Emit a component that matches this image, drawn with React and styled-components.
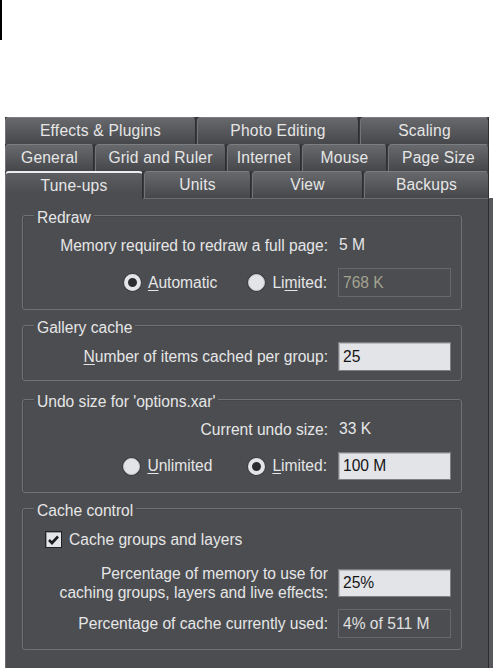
import React from "react"
import styled, { createGlobalStyle } from "styled-components"

const GlobalStyle = createGlobalStyle`
  html, body {
    margin: 0;
    padding: 0;
    background: #ffffff;
  }
  body {
    font-family: "Liberation Sans", Arial, sans-serif;
    font-size: 15.6px;
    overflow: hidden;
  }
`

const Page = styled.div`
  width: 493px;
  height: 668px;
  overflow: hidden;
`

const CursorMark = styled.div`
  width: 2px;
  height: 40px;
  background: #000;
`

const Dialog = styled.div`
  margin: 77px 0 0 5px;
  width: 484px;
  color: #e6e6e6;
`

const TabRow = styled.div`
  display: flex;
  gap: 1px;
  height: 27px;
  background: #37393d;
`

const Tab = styled.div`
  box-sizing: border-box;
  width: ${p => p.$w}px;
  flex: 0 0 auto;
  height: 27px;
  display: flex;
  align-items: center;
  justify-content: center;
  border-radius: 4px 4px 0 0;
  border-top: 1px solid #7c7e82;
  border-left: 1px solid #727478;
  border-right: 1px solid #2c2e32;
  background: linear-gradient(#67696d, #45474b);
  letter-spacing: 0.2px;
  white-space: nowrap;

  &:last-child {
    flex: 1 1 auto;
  }
`

const ActiveTab = styled(Tab)`
  position: relative;
  z-index: 1;
  height: 28px;
  margin-bottom: -1px;
  border-top: 2px solid #ededed;
  background: linear-gradient(#5c5e62, #4b4d51 80%);
`

const Panel = styled.div`
  display: flex;
  flex-direction: column;
  height: 480px;
  padding: 16px 26px 0 16px;
  background: #4b4d51;
  border-top: 1px solid #6a6c70;
  border-left: 1px solid #6a6c70;
  border-right: 1px solid #2a2c30;
  box-shadow: 4px 0 0 #56585c;
`

const Group = styled.div`
  position: relative;
  margin-top: ${p => p.$top || 0}px;
  display: flex;
  flex-direction: column;
  padding: ${p => p.$pad};
  border: 1px solid #6f7175;
  border-radius: 3px;
  box-shadow: inset 1px 1px 0 #44464a;
`

const Legend = styled.div`
  position: absolute;
  top: -7px;
  left: 11px;
  padding: 0 3px;
  line-height: 18px;
  background: #4b4d51;
`

const Row = styled.div`
  display: flex;
  align-items: center;
  justify-content: ${p => (p.$left ? "flex-start" : "flex-end")};
  gap: 10px;
  height: ${p => p.$h}px;
  margin-top: ${p => p.$gap || 0}px;
  padding: ${p => (p.$left ? "0 0 0 22px" : "0 10px 0 0")};
`

const Label = styled.div`
  text-align: right;
  line-height: 19px;
  white-space: nowrap;
`

const Value = styled.div`
  box-sizing: border-box;
  width: 113px;
  padding-left: 1px;
`

const Field = styled.div`
  box-sizing: border-box;
  width: 113px;
  height: ${p => p.$h || 29}px;
  display: flex;
  align-items: center;
  padding-left: 4px;
  border: 1px solid ${p => (p.$variant === "edit" ? "#7d7f83" : "#66686c")};
  background: ${p => (p.$variant === "edit" ? "#e2e4e8" : "#4b4d51")};
  color: ${p =>
    p.$variant === "edit" ? "#151515" : p.$variant === "disabled" ? "#a3a290" : "#e0e0e0"};
  box-shadow: ${p => (p.$variant === "edit" ? "inset 1px 1px 0 #b9bbbf" : "none")};
`

const Option = styled.label`
  display: flex;
  align-items: center;
  gap: 7px;
  margin-right: ${p => p.$mr || 0}px;
`

const RadioDot = styled.span`
  box-sizing: border-box;
  width: 17px;
  height: 17px;
  border-radius: 50%;
  background: ${p => (p.$checked ? "#2b2c30" : "#e3e4e7")};
  border: ${p => (p.$checked ? "4px solid #e3e4e7" : "1px solid #c9cacd")};
  box-shadow: 0 0 0 1px #3b3d41;
`

const CheckBox = styled.span`
  box-sizing: border-box;
  width: 17px;
  height: 17px;
  display: flex;
  align-items: center;
  justify-content: center;
  background: #e3e5e9;
  border: 1px solid #222326;
  box-shadow: inset 1px 1px 0 #9a9ca0;
`

const Key = styled.span`
  text-decoration: underline;
  text-underline-offset: 2px;
`

function Radio({ checked, children, mr }) {
  return (
    <Option $mr={mr}>
      <RadioDot $checked={checked} />
      <span>{children}</span>
    </Option>
  )
}

export default function App() {
  return (
    <Page>
      <GlobalStyle />
      <CursorMark />
      <Dialog>
        <TabRow>
          <Tab $w={191}>Effects &amp; Plugins</Tab>
          <Tab $w={162}>Photo Editing</Tab>
          <Tab $w={128}>Scaling</Tab>
        </TabRow>
        <TabRow>
          <Tab $w={89}>General</Tab>
          <Tab $w={131}>Grid and Ruler</Tab>
          <Tab $w={74}>Internet</Tab>
          <Tab $w={85}>Mouse</Tab>
          <Tab $w={100}>Page Size</Tab>
        </TabRow>
        <TabRow>
          <ActiveTab $w={138}>Tune-ups</ActiveTab>
          <Tab $w={107}>Units</Tab>
          <Tab $w={111}>View</Tab>
          <Tab $w={125}>Backups</Tab>
        </TabRow>

        <Panel>
          <Group $pad="15px 0 12px 0">
            <Legend>Redraw</Legend>
            <Row $h={28}>
              <Label>Memory required to redraw a full page:</Label>
              <Value>5 M</Value>
            </Row>
            <Row $h={29} $gap={9}>
              <Radio checked mr={21}>
                <Key>A</Key>utomatic
              </Radio>
              <Radio mr={1}>
                Li<Key>m</Key>ited:
              </Radio>
              <Field $variant="disabled">768 K</Field>
            </Row>
          </Group>

          <Group $top={15} $pad="16px 0 9px 0">
            <Legend>Gallery cache</Legend>
            <Row $h={29}>
              <Label>
                <Key>N</Key>umber of items cached per group:
              </Label>
              <Field $variant="edit">25</Field>
            </Row>
          </Group>

          <Group $top={18} $pad="15px 0 12px 0">
            <Legend>Undo size for 'options.xar'</Legend>
            <Row $h={28}>
              <Label>Current undo size:</Label>
              <Value>33 K</Value>
            </Row>
            <Row $h={28} $gap={9}>
              <Radio mr={26}>
                <Key>U</Key>nlimited
              </Radio>
              <Radio checked mr={1}>
                <Key>L</Key>imited:
              </Radio>
              <Field $variant="edit" $h={28}>
                100 M
              </Field>
            </Row>
          </Group>

          <Group $top={15} $pad="21px 0 11px 0">
            <Legend>Cache control</Legend>
            <Row $h={19} $left>
              <Option>
                <CheckBox>
                  <svg width="11" height="10" viewBox="0 0 11 10">
                    <path d="M1 5 L4 8 L10 1.5" fill="none" stroke="#1c1c1e" strokeWidth="2.6" />
                  </svg>
                </CheckBox>
                <span>Cache groups and layers</span>
              </Option>
            </Row>
            <Row $h={28} $gap={20}>
              <Label>
                Percentage of memory to use for
                <br />
                caching groups, layers and live effects:
              </Label>
              <Field $variant="edit" $h={28}>
                25%
              </Field>
            </Row>
            <Row $h={29} $gap={12}>
              <Label>Percentage of cache currently used:</Label>
              <Field $variant="readonly">4% of 511 M</Field>
            </Row>
          </Group>
        </Panel>
      </Dialog>
    </Page>
  )
}
